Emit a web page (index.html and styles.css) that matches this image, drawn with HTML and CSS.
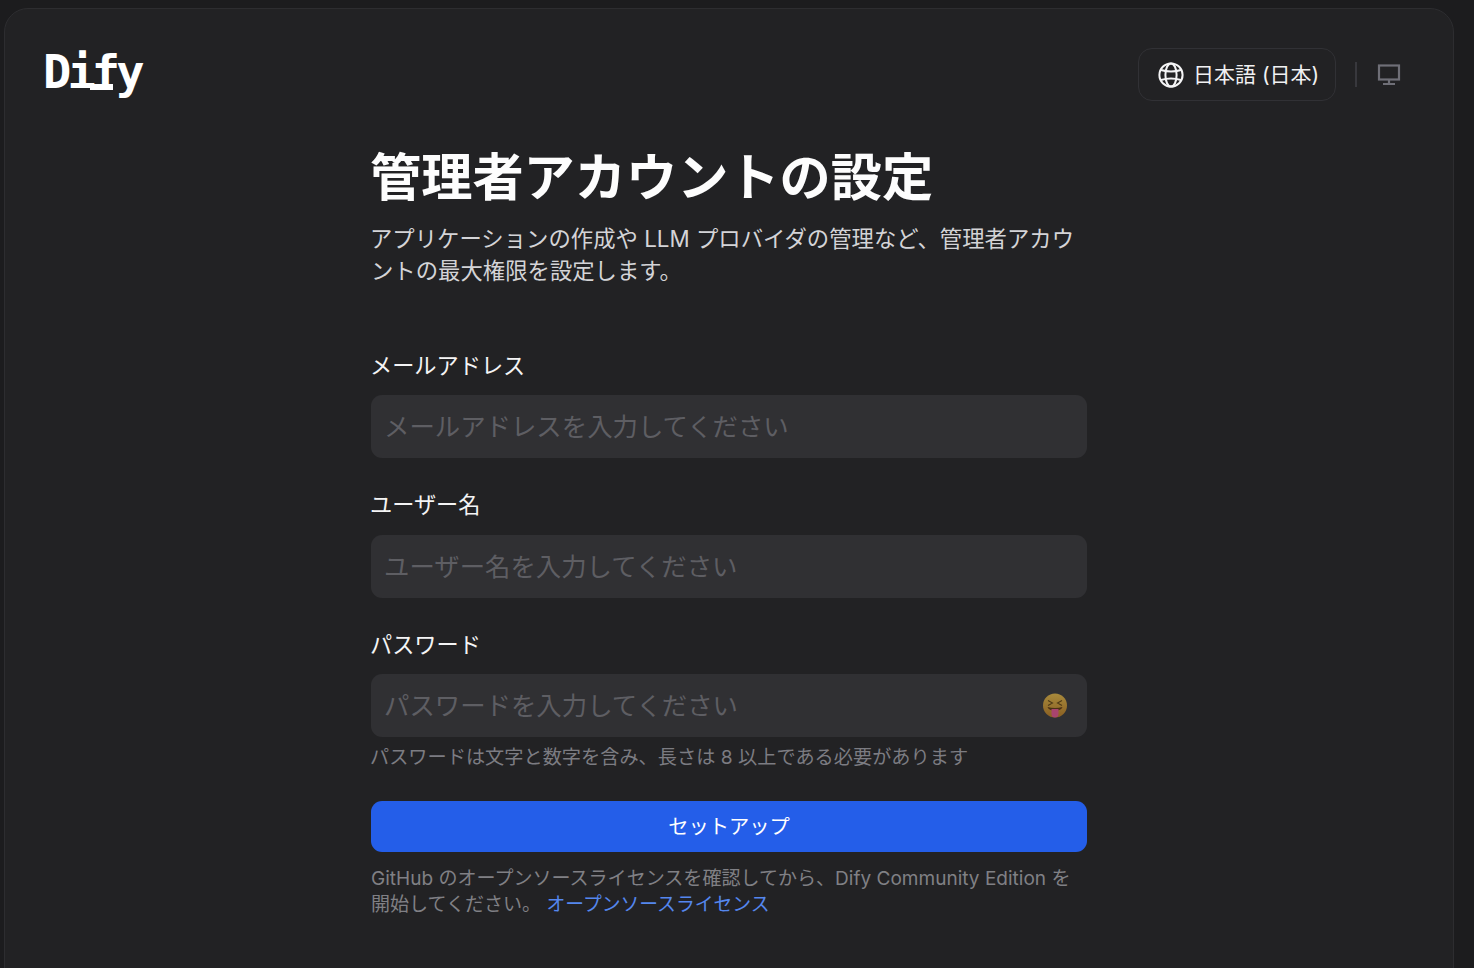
FILE: index.html
```html
<!DOCTYPE html>
<html lang="ja">
<head>
<meta charset="utf-8">
<title>Dify</title>
<link rel="stylesheet" href="styles.css">
</head>
<body>
<div class="card">
  <header class="header">
    <div class="logo">Di<span class="logo-f">f</span>y</div>
    <div class="tools">
      <button class="lang">
        <svg class="globe" viewBox="0 0 26 26" fill="none" stroke="#f5f5f6" stroke-width="2">
          <circle cx="13" cy="13" r="11.6"/>
          <ellipse cx="13" cy="13" rx="5.6" ry="11.6"/>
          <path d="M3 8c6 1.8 14 1.8 20 0M3 18c6-1.8 14-1.8 20 0"/>
        </svg>
        <span class="lang-text">日本語 (日本)</span>
      </button>
      <span class="sep"></span>
      <svg class="monitor" viewBox="0 0 24 22" fill="none" stroke="#6f6f77" stroke-width="2.2">
        <rect x="2" y="1.5" width="20" height="14"/>
        <path d="M12 15.5v4M6 20h12"/>
      </svg>
    </div>
  </header>
  <main class="main">
    <h1 class="title">管理者アカウントの設定</h1>
    <p class="sub">アプリケーションの作成や LLM プロバイダの管理など、管理者アカウントの最大権限を設定します。</p>
    <form class="form">
      <label class="label">メールアドレス</label>
      <div class="input"><span class="ph">メールアドレスを入力してください</span></div>
      <label class="label">ユーザー名</label>
      <div class="input"><span class="ph">ユーザー名を入力してください</span></div>
      <label class="label">パスワード</label>
      <div class="input"><span class="ph">パスワードを入力してください</span>
        <svg class="emoji" viewBox="0 0 24 26">
          <defs>
            <linearGradient id="face" x1="0" y1="0" x2="0" y2="1">
              <stop offset="0" stop-color="#a88a3c"/>
              <stop offset="1" stop-color="#8a5f22"/>
            </linearGradient>
          </defs>
          <circle cx="12" cy="12.5" r="12" fill="url(#face)"/>
          <path d="M5 7.5l4.5 2.5-4.5 2.5M19 7.5l-4.5 2.5 4.5 2.5" fill="none" stroke="#4f3a17" stroke-width="1.1"/>
          <path d="M4.5 14c4.500 1.400 10.500 1.400 15 0-1 2.600-3.500 3.800-7.500 3.800s-6.500-1.200-7.500-3.800z" fill="#4a3015"/>
          <path d="M8.5 16h7v5a3.500 3.500 0 0 1-7 0z" fill="#a8446e"/>
        </svg>
      </div>
      <p class="hint">パスワードは文字と数字を含み、長さは 8 以上である必要があります</p>
      <button type="button" class="submit"><span class="submit-text">セットアップ</span></button>
      <p class="foot">GitHub のオープンソースライセンスを確認してから、Dify Community Edition を開始してください。 <a class="link">オープンソースライセンス</a></p>
    </form>
  </main>
</div>
</body>
</html>
```
FILE: styles.css
```css
html, body { margin: 0; height: 100%; overflow: hidden; }
body {
  background: #1c1c1e;
  font-family: Inter, "Noto Sans CJK JP", sans-serif;
  color: #fff;
}
.card {
  box-sizing: border-box;
  margin: 8px 20px 0 4px;
  height: 1000px;
  background: #222224;
  border: 1px solid #2d2d30;
  border-radius: 24px;
}
.header {
  display: flex;
  justify-content: space-between;
  align-items: flex-start;
  padding: 38px 51px 0 38px;
  height: 91px;
  box-sizing: border-box;
}
.logo {
  font-family: "DejaVu Sans Mono", monospace;
  font-weight: 700;
  font-size: 47px;
  line-height: 50px;
  letter-spacing: -3.900px;
}
.logo-f { position: relative; }
.logo-f::after {
  content: "";
  position: absolute;
  left: -2px;
  right: 3px;
  bottom: 9px;
  height: 6px;
  background: #fff;
}
.tools { display: flex; align-items: center; padding-top: 1px; }
.lang {
  box-sizing: border-box;
  width: 198px;
  height: 53px;
  display: flex;
  align-items: center;
  gap: 9px;
  padding: 0 0 0 19px;
  background: transparent;
  border: 1px solid #313135;
  border-radius: 14px;
  color: #f1f1f2;
  font: 400 21px Inter, "Noto Sans CJK JP", sans-serif;
  white-space: nowrap;
}
.lang-text { padding-bottom: 4px; }
.globe { width: 26px; height: 26px; flex: none; }
.sep { width: 2px; height: 25px; background: #38383d; margin: 0 20px 0 19px; }
.monitor { width: 24px; height: 22px; margin-right: 1px; }
.main { margin-left: 366px; width: 716px; }
.title {
  margin: 0;
  padding-top: 46px;
  font-size: 51.2px;
  line-height: 62px;
  font-weight: 700;
  color: #fdfdfd;
  text-indent: -1px;
}
.sub {
  margin: 15px 0 0;
  font-size: 22.36px;
  line-height: 32px;
  color: #d4d4d7;
  text-indent: -1px;
}
.form { display: flex; flex-direction: column; margin-top: 63px; }
.label { font-size: 22.2px; line-height: 32px; font-weight: 400; color: #f4f4f5; margin-bottom: 13.2px; text-indent: -1px; }
.input {
  box-sizing: border-box;
  height: 63px;
  display: flex;
  align-items: center;
  justify-content: space-between;
  padding: 0 20px 0 13px;
  background: #303033;
  border-radius: 11px;
  margin-bottom: 31.3px;
}
.ph { font-size: 25.4px; color: #5e5e63; padding-bottom: 3px; }
.emoji { width: 24px; height: 26px; }
.hint { margin: -31.3px 0 0; padding-top: 5px; font-size: 19.2px; line-height: 30px; color: #7c7c82; text-indent: -1px; }
.submit {
  margin-top: 29px;
  height: 51px;
  border: 0;
  border-radius: 11px;
  background: #245ee9;
  color: #fff;
  font: 400 20.3px Inter, "Noto Sans CJK JP", sans-serif;
}
.submit-text { position: relative; top: -2px; }
.foot { margin: 14px 0 0; font-size: 19.05px; line-height: 25.5px; color: #808085; }
.link { color: #5587ee; font-size: 18.8px; }
```
